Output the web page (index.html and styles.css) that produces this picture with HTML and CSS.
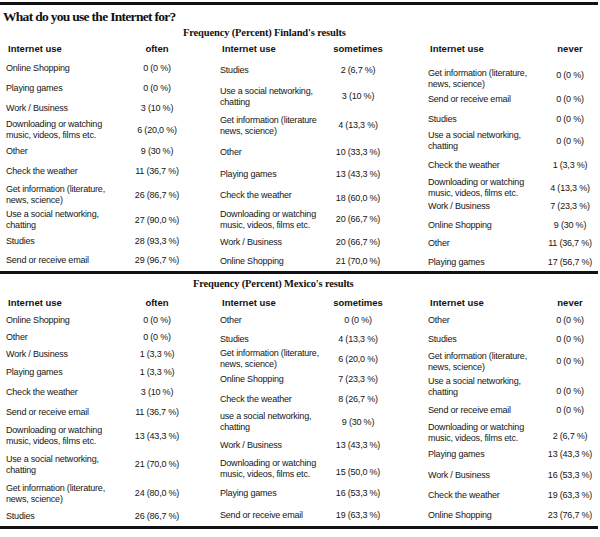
FILE: index.html
```html
<!DOCTYPE html>
<html>
<head>
<meta charset="utf-8">
<link rel="stylesheet" href="styles.css">
</head>
<body>
<div class="page">
  <div class="rule"></div>
  <h1 class="title">What do you use the Internet for?</h1>

  <section class="fin">
    <h2 class="sub sub-fin">Frequency (Percent) Finland's results</h2>
    <div class="tables">
      <div class="grp g1">
        <div class="hd"><span class="lab">Internet use</span><span class="val">often</span></div>
        <div class="row h20"><span class="lab">Online Shopping</span><span class="val">0 (0 %)</span></div>
        <div class="row h20"><span class="lab">Playing games</span><span class="val">0 (0 %)</span></div>
        <div class="row h21"><span class="lab">Work / Business</span><span class="val">3 (10 %)</span></div>
        <div class="row h22"><span class="lab">Downloading or watching<br>music, videos, films etc.</span><span class="val">6 (20,0 %)</span></div>
        <div class="row h20"><span class="lab">Other</span><span class="val">9 (30 %)</span></div>
        <div class="row h21"><span class="lab">Check the weather</span><span class="val">11 (36,7 %)</span></div>
        <div class="row h26"><span class="lab">Get information (literature,<br>news, science)</span><span class="val">26 (86,7 %)</span></div>
        <div class="row h24"><span class="lab">Use a social networking,<br>chatting</span><span class="val">27 (90,0 %)</span></div>
        <div class="row h19"><span class="lab">Studies</span><span class="val">28 (93,3 %)</span></div>
        <div class="row h18"><span class="lab">Send or receive email</span><span class="val">29 (96,7 %)</span></div>
      </div>
      <div class="grp g2">
        <div class="hd"><span class="lab">Internet use</span><span class="val">sometimes</span></div>
        <div class="row h24"><span class="lab">Studies</span><span class="val">2 (6,7 %)</span></div>
        <div class="row h29"><span class="lab">Use a social networking,<br>chatting</span><span class="val">3 (10 %)</span></div>
        <div class="row h29"><span class="lab">Get information (literature<br>news, science)</span><span class="val">4 (13,3 %)</span></div>
        <div class="row h24"><span class="lab">Other</span><span class="val">10 (33,3 %)</span></div>
        <div class="row h20"><span class="lab">Playing games</span><span class="val">13 (43,3 %)</span></div>
        <div class="row h23"><span class="lab">Check the weather</span><span class="val dn">18 (60,0 %)</span></div>
        <div class="row h25"><span class="lab">Downloading or watching<br>music, videos, films etc.</span><span class="val">20 (66,7 %)</span></div>
        <div class="row h21"><span class="lab">Work / Business</span><span class="val">20 (66,7 %)</span></div>
        <div class="row h17"><span class="lab">Online Shopping</span><span class="val">21 (70,0 %)</span></div>
      </div>
      <div class="grp g3 gap">
        <div class="hd"><span class="lab">Internet use</span><span class="val">never</span></div>
        <div class="row h22"><span class="lab">Get information (literature,<br>news, science)</span><span class="val up">0 (0 %)</span></div>
        <div class="row h19"><span class="lab">Send or receive email</span><span class="val">0 (0 %)</span></div>
        <div class="row h20"><span class="lab">Studies</span><span class="val">0 (0 %)</span></div>
        <div class="row h24"><span class="lab">Use a social networking,<br>chatting</span><span class="val">0 (0 %)</span></div>
        <div class="row h24"><span class="lab">Check the weather</span><span class="val">1 (3,3 %)</span></div>
        <div class="row h20"><span class="lab">Downloading or watching<br>music, videos, films etc.</span><span class="val">4 (13,3 %)</span></div>
        <div class="row h19"><span class="lab">Work / Business</span><span class="val">7 (23,3 %)</span></div>
        <div class="row h18"><span class="lab">Online Shopping</span><span class="val">9 (30 %)</span></div>
        <div class="row h19"><span class="lab">Other</span><span class="val">11 (36,7 %)</span></div>
        <div class="row h18"><span class="lab">Playing games</span><span class="val">17 (56,7 %)</span></div>
      </div>
    </div>
  </section>

  <div class="rule"></div>

  <section class="mex">
    <h2 class="sub sub-mex">Frequency (Percent) Mexico's results</h2>
    <div class="tables">
      <div class="grp g1">
        <div class="hd"><span class="lab">Internet use</span><span class="val">often</span></div>
        <div class="row h18"><span class="lab">Online Shopping</span><span class="val">0 (0 %)</span></div>
        <div class="row h16"><span class="lab">Other</span><span class="val">0 (0 %)</span></div>
        <div class="row h18"><span class="lab">Work / Business</span><span class="val">1 (3,3 %)</span></div>
        <div class="row h19"><span class="lab">Playing games</span><span class="val">1 (3,3 %)</span></div>
        <div class="row h20"><span class="lab">Check the weather</span><span class="val">3 (10 %)</span></div>
        <div class="row h21"><span class="lab">Send or receive email</span><span class="val">11 (36,7 %)</span></div>
        <div class="row h26"><span class="lab">Downloading or watching<br>music, videos, films etc.</span><span class="val">13 (43,3 %)</span></div>
        <div class="row h31"><span class="lab">Use a social networking,<br>chatting</span><span class="val">21 (70,0 %)</span></div>
        <div class="row h27"><span class="lab">Get information (literature,<br>news, science)</span><span class="val">24 (80,0 %)</span></div>
        <div class="row h19"><span class="lab">Studies</span><span class="val">26 (86,7 %)</span></div>
      </div>
      <div class="grp g2">
        <div class="hd"><span class="lab">Internet use</span><span class="val">sometimes</span></div>
        <div class="row h19"><span class="lab">Other</span><span class="val">0 (0 %)</span></div>
        <div class="row h18"><span class="lab">Studies</span><span class="val">4 (13,3 %)</span></div>
        <div class="row h22"><span class="lab">Get information (literature,<br>news, science)</span><span class="val">6 (20,0 %)</span></div>
        <div class="row h19"><span class="lab">Online Shopping</span><span class="val">7 (23,3 %)</span></div>
        <div class="row h21"><span class="lab">Check the weather</span><span class="val">8 (26,7 %)</span></div>
        <div class="row h24"><span class="lab">use a social networking,<br>chatting</span><span class="val">9 (30 %)</span></div>
        <div class="row h23"><span class="lab">Work / Business</span><span class="val">13 (43,3 %)</span></div>
        <div class="row h24"><span class="lab">Downloading or watching<br>music, videos, films etc.</span><span class="val dn">15 (50,0 %)</span></div>
        <div class="row h24"><span class="lab">Playing games</span><span class="val">16 (53,3 %)</span></div>
        <div class="row h21"><span class="lab">Send or receive email</span><span class="val">19 (63,3 %)</span></div>
      </div>
      <div class="grp g3">
        <div class="hd"><span class="lab">Internet use</span><span class="val">never</span></div>
        <div class="row h19"><span class="lab">Other</span><span class="val">0 (0 %)</span></div>
        <div class="row h19"><span class="lab">Studies</span><span class="val">0 (0 %)</span></div>
        <div class="row h25"><span class="lab">Get information (literature,<br>news, science)</span><span class="val">0 (0 %)</span></div>
        <div class="row h25"><span class="lab">Use a social networking,<br>chatting</span><span class="val dn2">0 (0 %)</span></div>
        <div class="row h23"><span class="lab">Send or receive email</span><span class="val">0 (0 %)</span></div>
        <div class="row h22"><span class="lab">Downloading or watching<br>music, videos, films etc.</span><span class="val dn">2 (6,7 %)</span></div>
        <div class="row h21"><span class="lab">Playing games</span><span class="val">13 (43,3 %)</span></div>
        <div class="row h20"><span class="lab">Work / Business</span><span class="val">16 (53,3 %)</span></div>
        <div class="row h20"><span class="lab">Check the weather</span><span class="val">19 (63,3 %)</span></div>
        <div class="row h21"><span class="lab">Online Shopping</span><span class="val">23 (76,7 %)</span></div>
      </div>
    </div>
  </section>

  <div class="rule"></div>
</div>
</body>
</html>
```

FILE: styles.css
```css
html, body {
  margin: 0;
  padding: 0;
  background: #ffffff;
}

.page {
  width: 600px;
  color: #151515;
  font-family: "Liberation Sans", Arial, sans-serif;
  font-size: 9px;
  letter-spacing: -0.2px;
}

.rule {
  height: 3px;
  background: #111111;
  margin-right: 2px;
}

.page > .rule:first-child {
  margin-top: 2px;
}

.title {
  margin: 0;
  padding: 2px 0 0 3px;
  height: 20px;
  line-height: 20px;
  font-family: "Liberation Serif", "Times New Roman", serif;
  font-weight: bold;
  font-size: 13.5px;
  letter-spacing: -0.7px;
  color: #111111;
}

.sub {
  margin: 0;
  font-family: "Liberation Serif", "Times New Roman", serif;
  font-weight: bold;
  font-size: 10.5px;
  letter-spacing: -0.15px;
  color: #111111;
  white-space: nowrap;
}

.sub-fin {
  height: 11px;
  line-height: 11px;
  padding-left: 183px;
}

.sub-mex {
  height: 20px;
  line-height: 20px;
  padding-left: 193px;
}

.tables {
  display: flex;
  align-items: flex-start;
}

.fin .tables { height: 233px; }
.mex .tables { height: 232px; }

.grp {
  display: flex;
  flex-direction: column;
  flex: none;
}

.g1 { width: 201px; --lw: 113px; --pl: 6px; }
.g2 { width: 198px; --lw: 116px; --pl: 19px; }
.g3 { width: 201px; --lw: 141px; --pl: 29px; }

.hd, .row {
  display: grid;
  grid-template-columns: var(--lw) 1fr;
  align-items: center;
}

.hd {
  font-weight: bold;
  font-size: 9.5px;
  letter-spacing: 0;
  color: #111111;
}

.fin .hd { height: 20px; }
.mex .hd { height: 17px; }

.fin .g3.gap .hd { margin-bottom: 10px; }

.lab {
  padding-left: var(--pl);
  white-space: nowrap;
  line-height: 11px;
}

.hd .lab { padding-left: calc(var(--pl) + 2px); }

.val {
  text-align: center;
  white-space: nowrap;
  line-height: 11px;
}

.val.up { padding-bottom: 8px; }
.val.dn { padding-top: 6px; }
.val.dn2 { padding-top: 9px; }

.h16 { height: 16px; }
.h17 { height: 17px; }
.h18 { height: 18px; }
.h19 { height: 19px; }
.h20 { height: 20px; }
.h21 { height: 21px; }
.h22 { height: 22px; }
.h23 { height: 23px; }
.h24 { height: 24px; }
.h25 { height: 25px; }
.h26 { height: 26px; }
.h27 { height: 27px; }
.h29 { height: 29px; }
.h31 { height: 31px; }
```
